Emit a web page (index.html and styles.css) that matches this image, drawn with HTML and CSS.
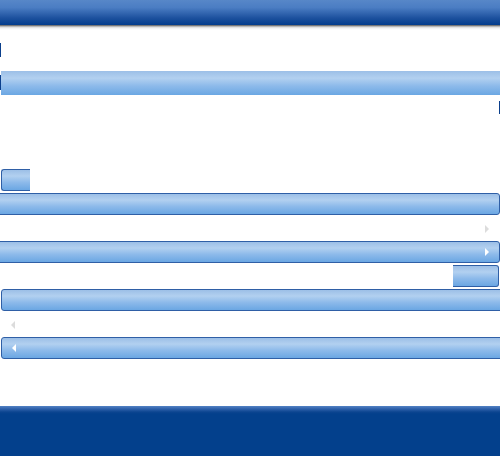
FILE: index.html
```html
<!DOCTYPE html>
<html lang="en">
<head>
    <meta charset="UTF-8">
    <meta name="viewport" content="width=device-width, initial-scale=1.0">
    <title>Panels</title>
    <link rel="stylesheet" href="styles.css">
</head>
<body>
<div class="page">
    <div class="top-bar"></div>
    <div class="top-shadow"></div>

    <div class="mark mark-first"></div>

    <div class="row row-first">
        <div class="mark mark-inline"></div>
        <div class="strip"></div>
    </div>

    <div class="row row-end">
        <div class="mark mark-right"></div>
    </div>

    <div class="row">
        <div class="btn btn-left"></div>
    </div>

    <div class="row">
        <div class="bar bar-open-left bar-two"></div>
    </div>

    <div class="row row-end row-arrow">
        <span class="arrow arrow-right arrow-muted"></span>
    </div>

    <div class="row">
        <div class="bar bar-open-left bar-three">
            <span class="arrow arrow-right"></span>
        </div>
    </div>

    <div class="row row-end">
        <div class="btn btn-right"></div>
    </div>

    <div class="row">
        <div class="bar bar-open-right bar-four"></div>
    </div>

    <div class="row row-arrow row-arrow-left">
        <span class="arrow arrow-left arrow-muted"></span>
    </div>

    <div class="row">
        <div class="bar bar-open-right bar-five">
            <span class="arrow arrow-left"></span>
        </div>
    </div>

    <div class="bottom-bar"></div>
</div>
</body>
</html>
```

FILE: styles.css
```css
html, body {
    margin: 0;
    padding: 0;
    background-color: #FFFFFF;
    font-family: "Liberation Sans", Arial, sans-serif;
}
.page {
    width: 500px;
    height: 456px;
    overflow: hidden;
    display: flex;
    flex-direction: column;
}
.top-bar {
    height: 25px;
    flex-shrink: 0;
    background: linear-gradient(#5787c8, #4b7dc3 30%, #1d519e 72%, #033d8c);
}
.top-shadow {
    height: 5px;
    flex-shrink: 0;
    background: linear-gradient(#555555, #9a9a9a 1px, #d6d6d6 2px, #eeeeee 3px, #fafafa 4px, #ffffff);
}
.row {
    display: flex;
    flex-shrink: 0;
}
.row-end {
    justify-content: flex-end;
}
.mark {
    width: 1px;
    background-color: #0b3f8c;
    flex-shrink: 0;
}
.mark-first {
    margin-top: 13px;
    height: 14px;
}
.row-first {
    margin-top: 14px;
    height: 24px;
}
.mark-inline {
    margin-top: 4px;
    height: 15px;
}
.strip {
    flex: 1;
    background: linear-gradient(#9cbfe7, #b2d0f0 30%, #8dbaea 62%, #6ba7e3);
}
.mark-right {
    margin-top: 6px;
    height: 13px;
}
.btn, .bar {
    box-sizing: border-box;
    height: 22px;
    border: 1px solid #2f5fa6;
    background: linear-gradient(#9cbfe7, #b2d0f0 30%, #8dbaea 62%, #6ba7e3);
    flex-shrink: 0;
}
.btn-left {
    margin-top: 55px;
    margin-left: 1px;
    width: 29px;
    border-right: none;
    border-radius: 3px 0 0 3px;
}
.bar {
    display: flex;
    align-items: center;
}
.bar-open-left {
    width: 504px;
    margin-left: -4px;
    border-radius: 3px;
    justify-content: flex-end;
    padding-right: 10px;
}
.bar-open-right {
    width: 504px;
    margin-left: 1px;
    border-radius: 3px;
    padding-left: 10px;
}
.bar-two {
    margin-top: 2px;
}
.row-arrow {
    margin-top: 10px;
    height: 8px;
    padding-right: 11px;
}
.row-arrow-left {
    padding-right: 0;
    padding-left: 11px;
}
.bar-three {
    margin-top: 8px;
}
.btn-right {
    margin-top: 2px;
    width: 46px;
    margin-right: 1px;
    border-left: none;
    border-radius: 0 3px 3px 0;
}
.bar-four {
    margin-top: 2px;
}
.bar-five {
    margin-top: 8px;
}
.arrow {
    display: block;
    width: 0;
    height: 0;
    border-top: 4px solid transparent;
    border-bottom: 4px solid transparent;
}
.arrow-right {
    border-left: 4px solid #FFFFFF;
}
.arrow-left {
    border-right: 4px solid #FFFFFF;
}
.arrow-muted.arrow-right {
    border-left-color: #dcdcdc;
}
.arrow-muted.arrow-left {
    border-right-color: #dcdcdc;
}
.bottom-bar {
    margin-top: auto;
    height: 50px;
    flex-shrink: 0;
    background: linear-gradient(#5382c4, #2d60aa 3px, #0c4590 6px, #03408c 8px, #03408c);
}
```
